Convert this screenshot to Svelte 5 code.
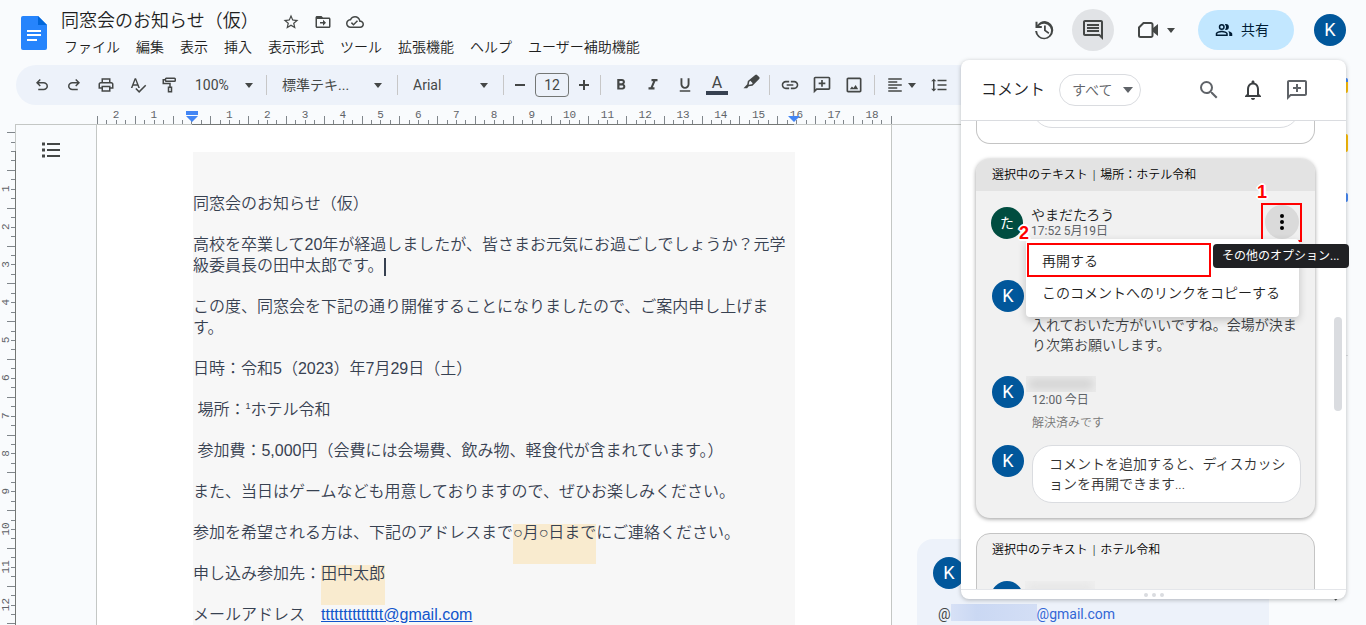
<script>
  const menus = ['ファイル', '編集', '表示', '挿入', '表示形式', 'ツール', '拡張機能', 'ヘルプ', 'ユーザー補助機能'];

  const icons = {
    star: 'M22 9.24l-7.19-.62L12 2 9.19 8.63 2 9.24l5.46 4.73L5.82 21 12 17.27 18.18 21l-1.63-7.03L22 9.24zM12 15.4l-3.76 2.27 1-4.28-3.32-2.88 4.38-.38L12 6.1l1.71 4.04 4.38.38-3.32 2.88 1 4.28L12 15.4z',
    move: 'M20 6h-8l-2-2H4c-1.1 0-2 .9-2 2v12c0 1.1.9 2 2 2h16c1.1 0 2-.9 2-2V8c0-1.1-.9-2-2-2zm0 12H4V8h16v10zm-8-1l4-4-4-4v3H8v2h4v3z',
    cloud: 'M19.35 10.04C18.67 6.59 15.64 4 12 4 9.11 4 6.6 5.64 5.35 8.04 2.34 8.36 0 10.91 0 14c0 3.31 2.69 6 6 6h13c2.76 0 5-2.24 5-5 0-2.64-2.05-4.78-4.65-4.96zM19 18H6c-2.21 0-4-1.79-4-4 0-2.05 1.53-3.76 3.56-3.97l1.07-.11.5-.95C8.08 7.14 9.94 6 12 6c2.62 0 4.88 1.86 5.39 4.43l.3 1.5 1.53.11c1.56.1 2.78 1.41 2.78 2.96 0 1.65-1.35 3-3 3zm-9-3.82l-2.09-2.09L6.5 13.5 10 17l6.01-6.01-1.41-1.41z',
    history: 'M13 3a9 9 0 0 0-7.5 4.1V3.8H3.5V10H9.8V8H6.9A7 7 0 1 1 5.1 12.9H3.1A9.1 9.1 0 1 0 13 3zM12 7.5v5.3l4.4 3.1.9-1.5-3.5-2.4V7.5z',
    comment: 'M21.99 4c0-1.1-.89-2-1.99-2H4c-1.1 0-2 .9-2 2v12c0 1.1.9 2 2 2h14l4 4-.01-18zM20 4v13.2l-1.2-1.2H4V4h16zM6 12h12v2H6zm0-3h12v2H6zm0-3h12v2H6z',
    undo: 'M7 19v-2h7.1q1.57 0 2.74-1T18 13.5t-1.16-2.5T14.1 10H7.8l2.6 2.6L9 14 4 9l5-5 1.4 1.4L7.8 8h6.3q2.42 0 4.16 1.57T20 13.5t-1.74 3.93T14.1 19z',
    redo: 'M9.9 19q-2.42 0-4.16-1.57T4 13.5t1.74-3.93T9.9 8h6.3l-2.6-2.6L15 4l5 5-5 5-1.4-1.4 2.6-2.6H9.9q-1.57 0-2.74 1T6 13.5 7.16 16t2.74 1H17v2z',
    print: 'M19 8h-1V3H6v5H5c-1.66 0-3 1.34-3 3v6h4v4h12v-4h4v-6c0-1.66-1.34-3-3-3zM8 5h8v3H8V5zm8 14H8v-4h8v4zm2-4v-2H6v2H4v-4c0-.55.45-1 1-1h14c.55 0 1 .45 1 1v4h-2z',
    spell: 'M12.45 16h2.09L9.43 3H7.57L2.46 16h2.09l1.12-3h5.64l1.14 3zm-6.02-5L8.5 5.48 10.57 11H6.43zm15.16.59l-8.09 8.09L9.83 16l-1.41 1.41 5.09 5.09L23 13l-1.41-1.41z',
    paint: 'M18 2H7a2 2 0 0 0-2 2H2v7h9v3H9v8h6v-8h-2V9H4V6h1a2 2 0 0 0 2 2h11a2 2 0 0 0 2-2V4a2 2 0 0 0-2-2zM7 4h11v2H7zM11 16h2v4h-2z',
    bold: 'M15.6 10.79c.97-.67 1.65-1.77 1.65-2.79 0-2.26-1.75-4-4-4H7v14h7.04c2.09 0 3.71-1.7 3.71-3.79 0-1.52-.86-2.82-2.15-3.42zM10 6.5h3c.83 0 1.5.67 1.5 1.5s-.67 1.5-1.5 1.5h-3v-3zm3.5 9H10v-3h3.5c.83 0 1.5.67 1.5 1.5s-.67 1.5-1.5 1.5z',
    italic: 'M10 4v3h2.21l-3.42 8H6v3h8v-3h-2.21l3.42-8H18V4z',
    underline: 'M12 17c3.31 0 6-2.69 6-6V3h-2.5v8c0 1.93-1.57 3.5-3.5 3.5S8.5 12.93 8.5 11V3H6v8c0 3.31 2.69 6 6 6zm-7 2v2h14v-2H5z',
    marker: 'M17.6 1.2a1.7 1.7 0 0 1 2.4 0l2.9 2.9a1.7 1.7 0 0 1 0 2.4L14 15.6l-5 .8L6.8 19H2l5-5.2.8-4.4zM9.7 10.4l-.7 4 4-.7 1.3-1.4-3.2-3.3z',
    link: 'M3.9 12c0-1.71 1.39-3.1 3.1-3.1h4V7H7c-2.76 0-5 2.24-5 5s2.24 5 5 5h4v-1.9H7c-1.71 0-3.1-1.39-3.1-3.1zM8 13h8v-2H8v2zm9-6h-4v1.9h4c1.71 0 3.1 1.39 3.1 3.1s-1.39 3.1-3.1 3.1h-4V17h4c2.76 0 5-2.24 5-5s-2.24-5-5-5z',
    addComment: 'M20 2H4c-1.1 0-2 .9-2 2v18l4-4h14c1.1 0 2-.9 2-2V4c0-1.1-.9-2-2-2zm0 14H5.2L4 17.2V4h16v12zM11 14h2v-3h3V9h-3V6h-2v3H8v2h3z',
    image: 'M19 5v14H5V5h14m0-2H5c-1.1 0-2 .9-2 2v14c0 1.1.9 2 2 2h14c1.1 0 2-.9 2-2V5c0-1.1-.9-2-2-2zM7 17l2.5-3.2 1.8 1.7 2.7-3.5 3 5z',
    align: 'M15 15H3v2h12v-2zm0-8H3v2h12V7zM3 13h18v-2H3v2zm0 8h18v-2H3v2zM3 3v2h18V3H3z',
    spacing: 'M6 7h2.5L5 3.5 1.5 7H4v10H1.5L5 20.5 8.5 17H6V7zm4-2v2h12V5H10zm0 14h12v-2H10v2zm0-6h12v-2H10v2z',
    search: 'M15.5 14h-.79l-.28-.27A6.471 6.471 0 0 0 16 9.5 6.5 6.5 0 1 0 9.5 16c1.61 0 3.09-.59 4.23-1.57l.27.28v.79l5 4.99L20.49 19l-4.99-5zm-6 0C7.01 14 5 11.99 5 9.5S7.01 5 9.5 5 14 7.01 14 9.5 11.99 14 9.5 14z',
    bell: 'M12 22c1.1 0 2-.9 2-2h-4c0 1.1.9 2 2 2zm6-6v-5c0-3.07-1.63-5.64-4.5-6.32V4c0-.83-.67-1.5-1.5-1.5s-1.5.67-1.5 1.5v.68C7.64 5.36 6 7.92 6 11v5l-2 2v1h16v-1l-2-2zm-2 1H8v-6c0-2.48 1.51-4.5 4-4.5s4 2.02 4 4.5v6z',
    people: 'M9 12a4 4 0 1 0 0-8 4 4 0 0 0 0 8zm0-6a2 2 0 1 1 0 4 2 2 0 0 1 0-4zM9 13c-2.67 0-8 1.34-8 4v3h16v-3c0-2.66-5.33-4-8-4zm6 5H3v-1c0-.7 3-2 6-2s6 1.3 6 2zM14.5 12a4 4 0 0 0 0-8c-.5 0-.9.1-1.3.2a6 6 0 0 1 0 7.6c.4.1.8.2 1.3.2zM17.5 13.5c1 .9 1.5 2 1.5 3.5v3h4v-3c0-2-2.5-3-5.5-3.5z'
  };

  // one centimetre on the rulers, with a tick every quarter
  const cm = 37.8;
  const hTicks = Array.from({ length: 85 }, (_, i) => i - 10);
  const vTicks = Array.from({ length: 53 }, (_, i) => i - 2);
  const hNumbers = [-2, -1, ...Array.from({ length: 18 }, (_, i) => i + 1)];
  const vNumbers = Array.from({ length: 12 }, (_, i) => i + 1);

  const isLong = (i) => Math.abs(i % 4) === 2;

  let menuOpen = true;
</script>

{#snippet icon(name, size = 20)}
  <svg width={size} height={size} viewBox="0 0 24 24" aria-hidden="true"><path d={icons[name]} fill="currentColor" fill-rule="evenodd" /></svg>
{/snippet}

<div class="app">
  <header>
    <svg class="logo" width="26" height="34" viewBox="0 0 26 34">
      <path d="M2 0h15l9 9v23a2 2 0 0 1-2 2H2a2 2 0 0 1-2-2V2a2 2 0 0 1 2-2z" fill="#2684fc" />
      <path d="M17 0l9 9h-9z" fill="#0066da" />
      <path d="M6 14h14v2H6zM6 18h14v2H6zM6 23h10v2H6z" fill="#fff" />
    </svg>
    <div class="doc-head">
      <div class="title-row">
        <h1>同窓会のお知らせ（仮）</h1>
        <button aria-label="スター">{@render icon('star', 18)}</button>
        <button aria-label="移動">{@render icon('move', 18)}</button>
        <button aria-label="保存状況">{@render icon('cloud', 18)}</button>
      </div>
      <nav>
        {#each menus as m}
          <button>{m}</button>
        {/each}
      </nav>
    </div>
    <div class="head-actions">
      <button class="round" aria-label="変更履歴">{@render icon('history', 24)}</button>
      <button class="round on" aria-label="コメント履歴">{@render icon('comment', 24)}</button>
      <button class="meet" aria-label="会議">
        <svg width="22" height="18" viewBox="0 0 22 18"><path d="M6.5 2H14a1.5 1.5 0 0 1 1.5 1.5v11A1.5 1.5 0 0 1 14 16H3.5A1.5 1.5 0 0 1 2 14.5v-8z" fill="none" stroke="currentColor" stroke-width="2" /><path d="M15.5 7.5L21 3v12l-5.5-4.5z" fill="currentColor" /></svg>
        <i class="caret"></i>
      </button>
      <button class="share">{@render icon('people', 18)}<span>共有</span></button>
      <span class="avatar">K</span>
    </div>
  </header>

  <div class="body">
    <main>
      <div class="toolbar">
        <button class="tool" aria-label="元に戻す">{@render icon('undo', 18)}</button>
        <button class="tool" aria-label="やり直し">{@render icon('redo', 18)}</button>
        <button class="tool" aria-label="印刷">{@render icon('print', 18)}</button>
        <button class="tool" aria-label="スペルチェック">{@render icon('spell', 18)}</button>
        <button class="tool" aria-label="書式を貼り付け">{@render icon('paint', 18)}</button>
        <label class="drop zoom"><select aria-label="ズーム"><option>100%</option></select><i class="caret"></i></label>
        <span class="sep"></span>
        <label class="drop para"><select aria-label="スタイル"><option>標準テキ...</option></select><i class="caret"></i></label>
        <span class="sep"></span>
        <label class="drop font"><select aria-label="フォント"><option>Arial</option></select><i class="caret"></i></label>
        <span class="sep"></span>
        <button class="step" aria-label="小さく"><svg width="12" height="12" viewBox="0 0 12 12"><path d="M1 6h10" stroke="currentColor" stroke-width="2" /></svg></button>
        <input class="size" aria-label="フォントサイズ" value="12" />
        <button class="step" aria-label="大きく"><svg width="12" height="12" viewBox="0 0 12 12"><path d="M1 6h10M6 1v10" stroke="currentColor" stroke-width="2" /></svg></button>
        <span class="sep"></span>
        <button class="tool" aria-label="太字">{@render icon('bold', 18)}</button>
        <button class="tool" aria-label="斜体">{@render icon('italic', 18)}</button>
        <button class="tool" aria-label="下線">{@render icon('underline', 18)}</button>
        <button class="tool color" aria-label="テキストの色">A</button>
        <button class="tool pen" aria-label="ハイライト">{@render icon('marker', 18)}</button>
        <span class="sep"></span>
        <button class="tool" aria-label="リンク">{@render icon('link', 20)}</button>
        <button class="tool" aria-label="コメントを追加">{@render icon('addComment', 20)}</button>
        <button class="tool" aria-label="画像">{@render icon('image', 20)}</button>
        <span class="sep"></span>
        <button class="tool wide" aria-label="配置">{@render icon('align', 18)}<i class="caret"></i></button>
        <button class="tool" aria-label="行間隔">{@render icon('spacing', 18)}</button>
      </div>

      <div class="ruler">
        <svg width="811" height="20">
          {#each hTicks as t}
            <rect x={Math.round(95.4 + t * cm / 4)} y={isLong(t) ? 11 : 15} width="1" height={isLong(t) ? 8 : 4} fill="#80868b" />
          {/each}
          {#each hNumbers as n}
            <text x={95.6 + n * cm} y="13" text-anchor="middle">{Math.abs(n)}</text>
          {/each}
          <rect x="96" y="19" width="602" height="1" fill="#747775" />
          <path d="M90 6h12v4H90zM90 11h12l-6 6zM692 11h12l-6 6z" fill="#4285f4" />
        </svg>
      </div>

      <div class="work">
        <div class="v-ruler">
          <svg width="16" height="500">
            {#each vTicks as t}
              <rect x={isLong(t) ? 7 : 11} y={Math.round(26 + t * cm / 4)} width={isLong(t) ? 8 : 4} height="1" fill="#80868b" />
            {/each}
            {#each vNumbers as n}
              <text transform="translate(9 {26 + n * cm}) rotate(-90)" text-anchor="middle">{n}</text>
            {/each}
            <rect x="15" y="0" width="1" height="26" fill="#c4c7c5" />
            <rect x="15" y="26" width="1" height="474" fill="#747775" />
          </svg>
        </div>
        <div class="outline">
          <button aria-label="概要を表示">
            <svg width="20" height="16" viewBox="0 0 20 16"><path d="M6 2h13M6 8h13M6 14h13" stroke="currentColor" stroke-width="2" /><path d="M1 2h3M1 8h3M1 14h3" stroke="currentColor" stroke-width="3" /></svg>
          </button>
        </div>
        <article>
          <div class="sheet">
            <p>同窓会のお知らせ（仮）</p>
            <p>高校を卒業して20年が経過しましたが、皆さまお元気にお過ごしでしょうか？元学級委員長の田中太郎です。<span class="cursor"></span></p>
            <p>この度、同窓会を下記の通り開催することになりましたので、ご案内申し上げます。</p>
            <p>日時：令和5（2023）年7月29日（土）</p>
            <p>&nbsp;場所：<sup>1</sup>ホテル令和</p>
            <p>&nbsp;参加費：5,000円（会費には会場費、飲み物、軽食代が含まれています。）</p>
            <p>また、当日はゲームなども用意しておりますので、ぜひお楽しみください。</p>
            <p>参加を希望される方は、下記のアドレスまで<mark>○月○日まで</mark>にご連絡ください。</p>
            <p>申し込み参加先：<mark>田中太郎</mark></p>
            <p>メールアドレス　<a href="mailto:tttttttttttttt@gmail.com">tttttttttttttt@gmail.com</a></p>
          </div>
        </article>
        <aside class="margin-notes">
          <div class="note">
            <span class="avatar">K</span>
            <p>@<span class="hidden-name"></span><a href="mailto:k@gmail.com">@gmail.com</a></p>
          </div>
        </aside>
      </div>
    </main>

    <div class="rail">
      <span class="app-icon cal"></span>
      <span class="app-icon keep"></span>
      <span class="app-icon tasks"></span>
      <hr />
      <svg width="8" height="12" viewBox="0 0 8 12"><path d="M1 1l5 5-5 5" fill="none" stroke="#444746" stroke-width="2" /></svg>
    </div>
  </div>

  <section class="panel">
    <div class="panel-head">
      <h2>コメント</h2>
      <label class="filter"><select aria-label="コメントの絞り込み"><option>すべて</option></select><i class="caret"></i></label>
      <button aria-label="検索">{@render icon('search', 24)}</button>
      <button class="dark" aria-label="通知">{@render icon('bell', 24)}</button>
      <button aria-label="コメントを追加">{@render icon('addComment', 24)}</button>
    </div>

    <div class="threads">
      <div class="card previous"><div class="stub"></div></div>

      <div class="card active">
        <div class="quote"><span>選択中のテキスト</span><span>|</span><span>場所：ホテル令和</span></div>
        <div class="entry first">
          <span class="avatar green">た</span>
          <div class="who">
            <b>やまだたろう</b>
            <time>17:52 5月19日</time>
          </div>
          <button class="more" aria-label="その他のオプション" on:click={() => (menuOpen = !menuOpen)}>
            <svg width="6" height="18" viewBox="0 0 6 18"><circle cx="3" cy="3" r="2" /><circle cx="3" cy="9" r="2" /><circle cx="3" cy="15" r="2" /></svg>
          </button>
          <span class="frame-more"></span>
          <strong class="num num-one">1</strong>
          {#if menuOpen}
            <div class="menu">
              <button class="reopen">再開する</button>
              <button>このコメントへのリンクをコピーする</button>
            </div>
          {/if}
          <strong class="num num-two">2</strong>
        </div>
        <div class="entry second">
          <span class="avatar">K</span>
          <p>入れておいた方がいいですね。会場が決まり次第お願いします。</p>
        </div>
        <div class="entry third">
          <span class="avatar">K</span>
          <div class="who">
            <span class="smudge"></span>
            <time>12:00 今日</time>
            <small>解決済みです</small>
          </div>
        </div>
        <div class="entry">
          <span class="avatar">K</span>
          <textarea aria-label="コメントを追加" rows="2" placeholder="コメントを追加すると、ディスカッションを再開できます..."></textarea>
        </div>
      </div>

      <div class="card next">
        <div class="quote"><span>選択中のテキスト</span><span>|</span><span>ホテル令和</span></div>
        <div class="entry">
          <span class="avatar"></span>
          <span class="smudge light"></span>
        </div>
      </div>
    </div>

    <div class="grip"><i></i><i></i><i></i></div>
    <span class="thumb"></span>
    {#if menuOpen}
      <span class="tip">その他のオプション...</span>
    {/if}
  </section>
</div>

<style>
  :global(body){
    background: #f9fbfd;
    overflow: hidden;
  }

  .app{
    position: relative;
    height: 100vh;
    display: flex;
    flex-direction: column;
    overflow: hidden;
    font-family: Roboto, "Noto Sans CJK JP", sans-serif;
    font-size: 14px;
    line-height: 20px;
    color: #1f1f1f;
  }

  .app *, .app *::after{
    box-sizing: border-box;
  }

  button, select, input, textarea{
    font: inherit;
    color: inherit;
    background: none;
    border: 0;
    padding: 0;
    margin: 0;
    appearance: none;
    outline: none;
  }

  button{
    display: inline-flex;
    align-items: center;
    justify-content: center;
    cursor: pointer;
  }

  h1, h2, p{
    margin: 0;
    font-weight: 350;
  }

  svg{
    display: block;
    flex-shrink: 0;
  }

  .caret{
    border: 4px solid transparent;
    border-top: 5px solid #444746;
    border-bottom: 0;
    flex-shrink: 0;
    pointer-events: none;
  }

  .avatar{
    width: 32px;
    height: 32px;
    border-radius: 50%;
    background: #01579b;
    color: #fff;
    font-size: 18px;
    line-height: 32px;
    text-align: center;
    flex-shrink: 0;
  }

  .avatar.green{
    background: #004d40;
    font-size: 14px;
  }

  /* HEADER */

  header{
    height: 65px;
    flex-shrink: 0;
    display: flex;
    padding: 0 20px;
    color: #444746;
  }

  .logo{
    margin: 16px 14px 0 1px;
  }

  .doc-head{
    flex: 1;
    padding-top: 7px;
    color: #1f1f1f;
  }

  .title-row{
    display: flex;
    align-items: center;
    height: 28px;
    gap: 14px;
  }

  .title-row button{
    width: 18px;
    color: #444746;
    padding-top: 2px;
  }

  .title-row h1{
    font-size: 18px;
    line-height: 26px;
    margin-right: 9px;
  }

  nav{
    display: flex;
    gap: 16px;
    padding-left: 3px;
    white-space: nowrap;
    font-weight: 350;
  }

  nav button{
    height: 24px;
  }

  .head-actions{
    display: flex;
    align-items: center;
    height: 60px;
  }

  .round{
    width: 42px;
    height: 42px;
    border-radius: 50%;
    margin-right: 7px;
  }

  .round.on{
    background: #e1e3e6;
    margin-right: 23px;
  }

  .meet{
    gap: 8px;
    margin-right: 23px;
  }

  .share{
    width: 96px;
    height: 40px;
    padding-right: 8px;
    border-radius: 20px;
    background: #c2e7ff;
    color: #001d35;
    gap: 8px;
    margin-right: 20px;
  }

  /* TOOLBAR */

  .body{
    display: flex;
    flex: 1;
    min-height: 0;
  }

  main{
    flex: 1;
    min-width: 0;
    display: flex;
    flex-direction: column;
  }

  .toolbar{
    height: 40px;
    flex-shrink: 0;
    display: flex;
    align-items: center;
    margin: 0 12px 0 16px;
    padding: 0 10px;
    border-radius: 20px;
    background: #edf2fa;
    color: #444746;
  }

  .tool{
    width: 32px;
    height: 32px;
    flex-shrink: 0;
  }

  .tool.wide{
    width: 44px;
    gap: 4px;
  }

  .tool.color{
    font-size: 16px;
    line-height: 16px;
    height: 20px;
    width: 22px;
    margin: 0 5px;
    border-bottom: 4px solid #374151;
  }

  .tool.pen{
    padding: 0 0 4px 4px;
  }

  .sep{
    width: 1px;
    height: 20px;
    margin: 0 4px;
    background: #c7c7c7;
    flex-shrink: 0;
  }

  .drop{
    display: flex;
    align-items: center;
    padding: 0 11px;
    flex-shrink: 0;
  }

  .drop select{
    flex: 1;
    min-width: 0;
  }

  .zoom{
    width: 76px;
    padding: 0 9px;
  }

  .para{
    width: 122px;
  }

  .font{
    width: 97px;
  }

  .step{
    width: 24px;
    height: 24px;
  }

  .size{
    width: 34px;
    height: 24px;
    margin: 0 3px;
    border: 1px solid #747775;
    border-radius: 4px;
    text-align: center;
  }

  /* RULERS */

  .ruler{
    height: 20px;
    flex-shrink: 0;
    margin-left: 15px;
    padding-left: 81px;
    background: linear-gradient(#c4c7c5, #c4c7c5) bottom / 100% 1px no-repeat;
  }

  svg text{
    font-family: "Liberation Mono", monospace;
    font-size: 11px;
    fill: #5f6368;
  }

  .work{
    display: flex;
    flex: 1;
    min-height: 0;
    overflow: hidden;
  }

  .v-ruler{
    width: 16px;
    flex-shrink: 0;
  }

  .outline{
    width: 81px;
    flex-shrink: 0;
    padding: 17px 0 0 25px;
    color: #444746;
  }

  /* DOCUMENT */

  article{
    width: 796px;
    flex-shrink: 0;
    margin-left: -1px;
    padding: 27px 96px 0;
    background: #fff;
    border: 1px solid #c4c7c5;
    border-width: 0 1px;
  }

  .sheet{
    background: #f7f7f7;
    padding-top: 41px;
    font-family: "Liberation Sans", "Noto Sans CJK JP", sans-serif;
    font-size: 16px;
    line-height: 21px;
    color: #374151;
  }

  .sheet p{
    margin-bottom: 20px;
  }

  .sheet sup{
    font-size: 9px;
    line-height: 9px;
  }

  .sheet a{
    color: #1155cc;
  }

  mark{
    background: #f9ebcf;
    color: inherit;
    padding-bottom: 23px;
  }

  .cursor{
    display: inline-block;
    width: 2px;
    height: 18px;
    margin-left: 1px;
    vertical-align: middle;
    background: #374151;
  }

  .margin-notes{
    flex: 1;
    min-width: 0;
    padding: 414px 0 0 25px;
  }

  .note{
    width: 352px;
    height: 120px;
    padding: 18px 16px;
    border-radius: 16px;
    background: #edf2fa;
    color: #444746;
  }

  .note .avatar{
    display: block;
  }

  .note p{
    display: flex;
    padding: 15px 0 0 5px;
    font-weight: 400;
  }

  .note a{
    color: #3367d6;
    text-decoration: none;
  }

  .hidden-name{
    width: 86px;
    height: 17px;
    background: linear-gradient(90deg, #d7e1f6, #cad8f3 30%, #d3def5);
  }

  .rail{
    width: 56px;
    display: flex;
    flex-direction: column;
    align-items: center;
    flex-shrink: 0;
    padding-top: 13px;
  }

  .app-icon{
    width: 20px;
    border-radius: 2px;
  }

  .cal{
    height: 15px;
    background: linear-gradient(#4285f4 4px, #fbbc04 4px);
    margin-bottom: 41px;
  }

  .keep{
    height: 18px;
    background: #fbbc04;
    margin-bottom: 41px;
  }

  .tasks{
    height: 9px;
    background: #4285f4;
    margin-bottom: 153px;
  }

  hr{
    width: 20px;
    height: 1px;
    margin: 0 0 233px;
    border: 0;
    background: #dadce0;
  }

  /* COMMENT PANEL */

  .panel{
    position: absolute;
    top: 60px;
    right: 20px;
    bottom: 26px;
    width: 385px;
    display: flex;
    flex-direction: column;
    background: #fff;
    border-radius: 8px;
    box-shadow: 0 1px 4px rgba(60, 64, 67, .35);
  }

  .panel-head{
    height: 61px;
    flex-shrink: 0;
    display: flex;
    align-items: center;
    padding: 0 37px 0 20px;
    border-bottom: 1px solid #dadce0;
    color: #5f6368;
  }

  .panel-head h2{
    font-size: 16px;
    color: #202124;
  }

  .panel-head button{
    width: 24px;
    margin-left: 20px;
  }

  .panel-head .dark{
    color: #3c4043;
  }

  .filter{
    display: flex;
    align-items: center;
    width: 82px;
    height: 32px;
    margin: 0 auto 0 14px;
    padding: 0 7px 0 12px;
    border: 1px solid #dadce0;
    border-radius: 16px;
    font-weight: 350;
  }

  .filter select{
    flex: 1;
    min-width: 0;
  }

  .filter .caret{
    border-width: 6px 5px 0;
    border-top-color: #5f6368;
  }

  .threads{
    flex: 1;
    min-height: 0;
    overflow: hidden;
    padding: 0 31px 0 15px;
  }

  .card{
    border: 1px solid #c4c4c4;
    border-radius: 14px;
    background: #f1f1f1;
    margin-bottom: 15px;
  }

  .previous{
    display: flow-root;
    height: 23px;
    padding: 0 14px 0 55px;
    border-top: 0;
    border-radius: 0 0 14px 14px;
    background: #fff;
  }

  .stub{
    height: 40px;
    margin-top: -33px;
    border: 1px solid #dadce0;
    border-radius: 20px;
  }

  .active{
    border: 0;
    padding-bottom: 15px;
    box-shadow: 0 1px 4px rgba(0, 0, 0, .4);
  }

  .quote{
    display: flex;
    gap: 5px;
    height: 32px;
    padding: 0 16px;
    font-size: 12px;
    line-height: 32px;
    color: #000;
    font-weight: 350;
  }

  .active .quote{
    background: #e3e3e3;
    border-radius: 14px 14px 0 0;
  }

  .entry{
    position: relative;
    display: flex;
    gap: 8px;
    padding: 0 14px 0 16px;
  }

  .first{
    padding: 16px 16px 0 15px;
    margin-bottom: 41px;
  }

  .second{
    margin-bottom: 21px;
  }

  .second p{
    padding-top: 35px;
    color: #3c4043;
  }

  .who{
    flex: 1;
    display: flex;
    flex-direction: column;
    line-height: 16px;
  }

  .who b{
    font-weight: 350;
    color: #202124;
  }

  time{
    font-size: 12px;
    color: #5f6368;
  }

  small{
    padding-top: 6px;
    font-size: 12px;
    line-height: 18px;
    color: #777;
    font-weight: 350;
  }

  .third{
    margin-bottom: 13px;
  }

  .smudge{
    width: 70px;
    height: 16px;
    margin-left: -6px;
    background: #d2d2d2;
    box-shadow: inset 0 0 8px 3px #ececec;
  }

  .smudge.light{
    background: #e6e6e6;
    box-shadow: inset 0 0 8px 3px #efefef;
  }

  textarea{
    flex: 1;
    min-width: 0;
    height: 58px;
    padding: 8px 12px 8px 16px;
    border: 1px solid #dadce0;
    border-radius: 20px;
    background: #fff;
    resize: none;
    overflow: hidden;
    line-break: anywhere;
    font-weight: 350;
  }

  textarea::placeholder{
    color: #333;
    opacity: 1;
  }

  .more{
    width: 34px;
    height: 34px;
    border-radius: 50%;
    background: #dadada;
    margin: -2px 0;
  }

  .frame-more, .reopen::after{
    position: absolute;
    border: 2px solid #f00;
    pointer-events: none;
  }

  .frame-more{
    top: 12px;
    right: 13px;
    width: 41px;
    height: 39px;
  }

  .num{
    position: absolute;
    z-index: 3;
    font-family: "Liberation Sans", sans-serif;
    font-size: 18px;
    line-height: 20px;
    color: #f00;
    text-shadow: 2px 0 #fff, -2px 0 #fff, 0 2px #fff, 0 -2px #fff, 1px 1px #fff, -1px -1px #fff, 1px -1px #fff, -1px 1px #fff;
  }

  .num-one{
    top: -9px;
    right: 48px;
  }

  .num-two{
    top: 32px;
    left: 43px;
  }

  .menu{
    position: absolute;
    z-index: 2;
    top: 48px;
    left: 50px;
    right: 16px;
    padding: 6px 0 8px;
    border-radius: 4px;
    background: #fff;
    box-shadow: 0 3px 8px rgba(0, 0, 0, .2);
    font-weight: 350;
  }

  .menu button{
    position: relative;
    width: 100%;
    height: 32px;
    padding-left: 16px;
    justify-content: flex-start;
    white-space: nowrap;
  }

  .reopen::after{
    content: "";
    top: -2px;
    left: 1px;
    width: 184px;
    height: 34px;
  }

  .tip{
    position: absolute;
    z-index: 4;
    top: 184px;
    left: 252px;
    height: 24px;
    padding: 0 9px;
    border-radius: 4px;
    background: #202124;
    color: #fff;
    font-size: 12px;
    line-height: 24px;
    white-space: nowrap;
  }

  .next{
    height: 120px;
  }

  .next .quote{
    padding: 0 15px;
  }

  .next .entry{
    padding: 15px 14px 0;
  }

  .grip{
    height: 10px;
    flex-shrink: 0;
    display: flex;
    align-items: center;
    justify-content: center;
    gap: 4px;
    border-top: 1px solid #e4e6ea;
  }

  .grip i{
    width: 4px;
    height: 4px;
    border-radius: 50%;
    background: #dadce0;
  }

  .thumb{
    position: absolute;
    top: 257px;
    right: 4px;
    width: 8px;
    height: 94px;
    border-radius: 4px;
    background: #dadce0;
  }
</style>
